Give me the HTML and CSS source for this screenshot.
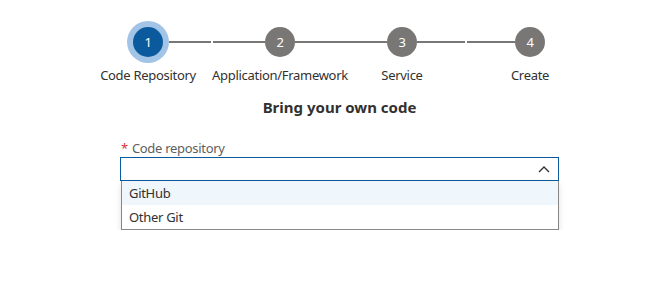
FILE: index.html
```html
<!DOCTYPE html>
<html lang="en">
<head>
    <meta charset="UTF-8">
    <meta name="viewport" content="width=device-width, initial-scale=1.0">
    <title>Bring your own code</title>
    <link rel="stylesheet" href="styles.css">
</head>
<body>
    <div class="wizard">
        <!-- Шаги мастера -->
        <div class="track">
            <div class="step-circle step-active">1</div>
            <div class="step-line line-a"></div>
            <div class="step-line line-b"></div>
            <div class="step-circle">2</div>
            <div class="step-line line-c"></div>
            <div class="step-circle">3</div>
            <div class="step-line line-d"></div>
            <div class="step-line line-e"></div>
            <div class="step-circle">4</div>
        </div>
        <div class="labels">
            <div class="step-label label-1">Code Repository</div>
            <div class="step-label label-2">Application/Framework</div>
            <div class="step-label label-3">Service</div>
            <div class="step-label label-4">Create</div>
        </div>

        <div class="form">
            <h2 class="form-title">Bring your own code</h2>
            <label class="field-label"><span class="required">*</span>Code repository</label>
            <div class="combo">
                <div class="combo-input">
                    <svg class="chevron" width="12" height="8" viewBox="0 0 12 8">
                        <polyline points="1,7 6,2 11,7" fill="none" stroke="#323130" stroke-width="1.4"/>
                    </svg>
                </div>
                <ul class="combo-list">
                    <li class="combo-item combo-item-hover">GitHub</li>
                    <li class="combo-item">Other Git</li>
                </ul>
            </div>
        </div>
    </div>
</body>
</html>
```

FILE: styles.css
```css
body {
    font-family: "Segoe UI", "Noto Sans", sans-serif;
    margin: 0;
    background: #fff;
    color: #323130;
    letter-spacing: -0.3px;
}

.wizard {
    padding-top: 27px;
}

.track {
    display: flex;
    align-items: center;
    padding-left: 127px;
    height: 30px;
}

.step-circle {
    width: 30px;
    height: 30px;
    border-radius: 50%;
    background-color: #797775;
    color: #fff;
    font-size: 13px;
    display: flex;
    align-items: center;
    justify-content: center;
    flex-shrink: 0;
}

.step-active {
    background-color: #0b5a9e;
    margin: 0 6px;
    box-shadow: 0 0 0 6px #a2c4e6;
}

.step-line {
    height: 2px;
    background-color: #797775;
    flex-shrink: 0;
}

.line-a { width: 42px; }
.line-b { width: 52px; margin-left: 2px; }
.line-c { width: 92px; }
.line-d { width: 48px; }
.line-e { width: 48px; margin-left: 2px; }

.labels {
    display: flex;
    padding-left: 84px;
    margin-top: 9px;
}

.step-label {
    font-size: 13px;
    text-align: center;
    white-space: nowrap;
    line-height: 18px;
}

.label-1 { width: 128px; }
.label-2 { width: 136px; }
.label-3 { width: 108px; }
.label-4 { width: 148px; }

.form {
    width: 439px;
    margin-left: 120px;
}

.form-title {
    font-size: 15px;
    font-weight: 700;
    text-align: center;
    margin: 13px 0 23px;
    line-height: 20px;
    letter-spacing: 0;
}

.field-label {
    display: block;
    font-size: 13px;
    color: #605e5c;
    line-height: 17px;
}

.required {
    color: #d13438;
    margin: 0 4px 0 1px;
}

.combo-input {
    height: 22px;
    border: 1px solid #0b5a9e;
    display: flex;
    align-items: center;
    justify-content: flex-end;
    padding-right: 8px;
}

.combo-list {
    list-style: none;
    margin: 0 0 0 1px;
    padding: 0;
    border: 1px solid #8a8886;
    border-top: none;
    box-shadow: 0 3px 6px rgba(0, 0, 0, 0.13);
}

.combo-item {
    font-size: 13px;
    line-height: 24px;
    padding-left: 7px;
}

.combo-item-hover {
    background-color: #eff6fc;
}
```
